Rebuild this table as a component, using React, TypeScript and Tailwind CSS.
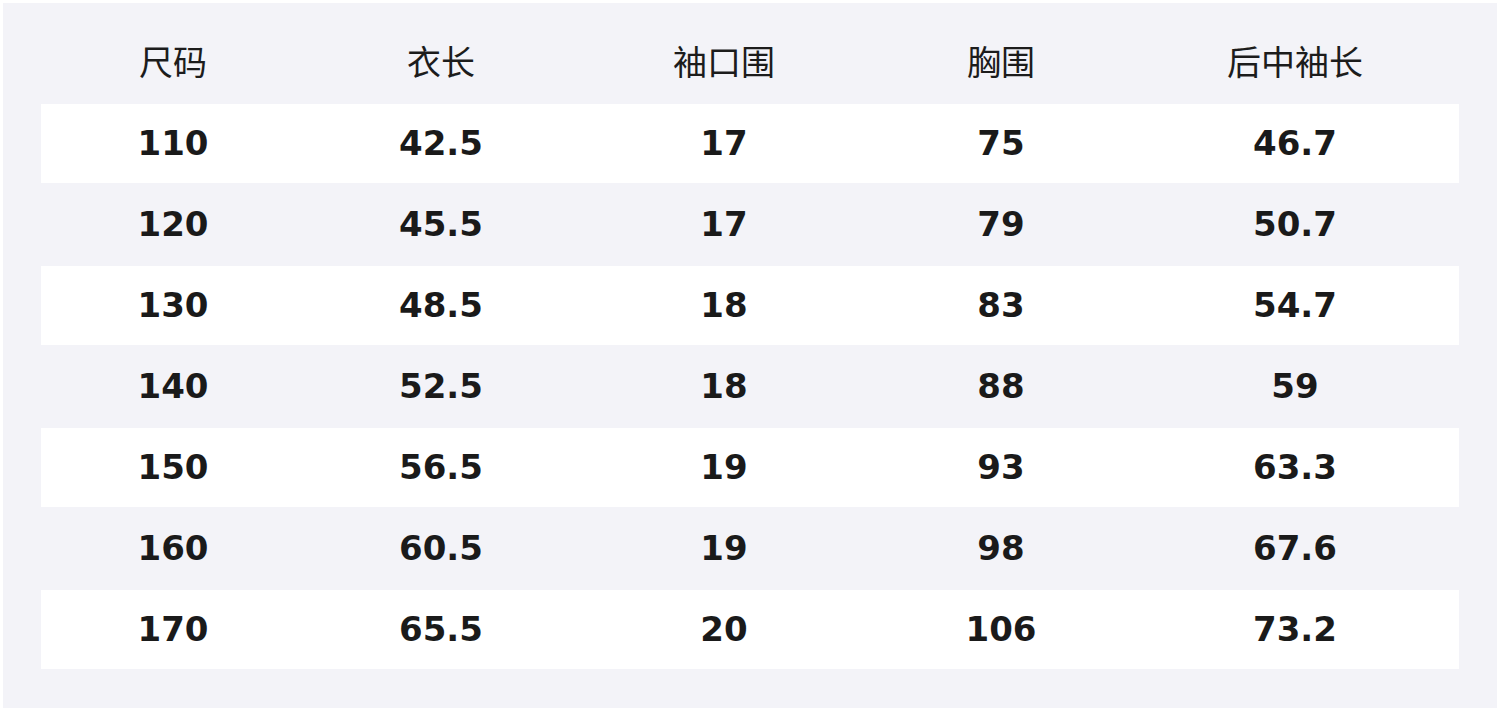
const headers = ['尺码', '衣长', '袖口围', '胸围', '后中袖长']

const rows = [
    ['110', '42.5', '17', '75', '46.7'],
    ['120', '45.5', '17', '79', '50.7'],
    ['130', '48.5', '18', '83', '54.7'],
    ['140', '52.5', '18', '88', '59'],
    ['150', '56.5', '19', '93', '63.3'],
    ['160', '60.5', '19', '98', '67.6'],
    ['170', '65.5', '20', '106', '73.2'],
]

const colWidths = ['w-[264px]', 'w-[272px]', 'w-[294px]', 'w-[260px]', 'w-[328px]']

export default function App() {
    return (
        <div className="w-[1500px] h-[711px] bg-white p-[3px]">
            <div className="h-[705px] bg-[#f3f3f8] pt-[19px] px-[38px]">
                <div className="flex h-[81px] items-center text-[34px] text-[#1c1c1c] font-['Noto_Sans','Noto_Sans_CJK_SC',sans-serif]">
                    {headers.map((h, i) => (
                        <div key={h} className={colWidths[i] + " text-center"}>{h}</div>
                    ))}
                </div>
                {rows.map((r, ri) => (
                    <div
                        key={r[0]}
                        className={"flex items-center text-[34px] font-bold text-[#1a1a1a] font-['DejaVu_Sans',sans-serif] " +
                            (ri % 2 === 0 ? 'h-[79px] my-[1px] bg-white' : 'h-[81px] bg-[#f3f3f8]')}
                    >
                        {r.map((v, i) => (
                            <div key={i} className={colWidths[i] + " text-center"}>{v}</div>
                        ))}
                    </div>
                ))}
            </div>
        </div>
    )
}
